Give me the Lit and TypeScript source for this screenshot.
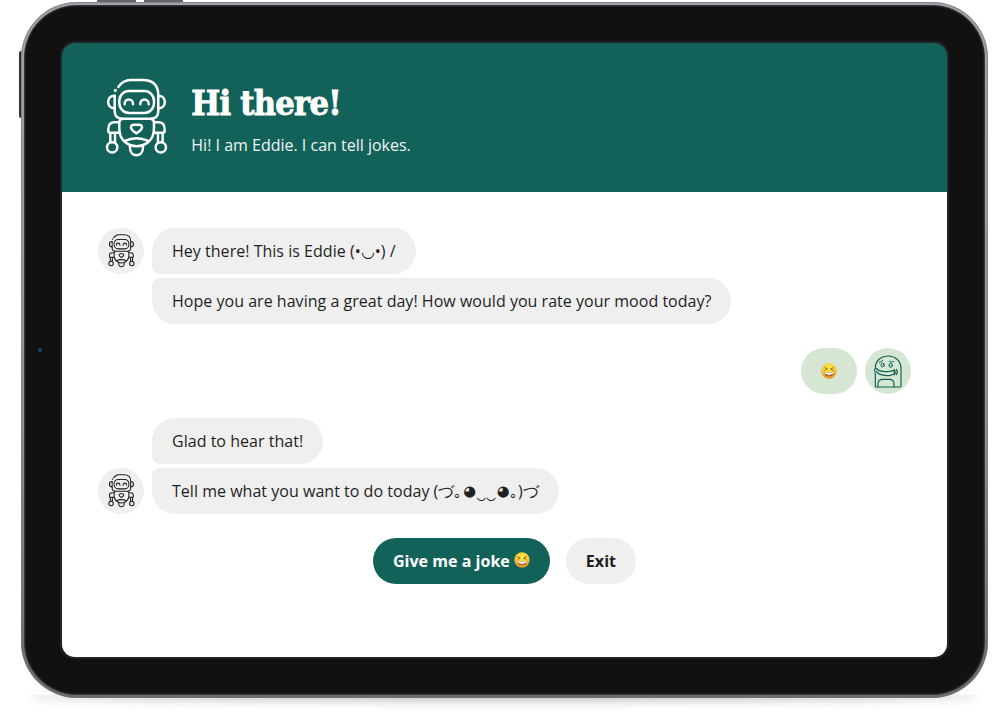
import { LitElement, html, css, svg } from "lit";
import { customElement } from "lit/decorators.js";

@customElement("robot-icon")
class RobotIcon extends LitElement {
  static styles = css`
    :host { display: block; }
    svg { display: block; width: 100%; height: 100%; fill: none; stroke: currentColor; stroke-width: 7.4; stroke-linecap: round; stroke-linejoin: round; }
  `;
  render() {
    const arm = svg`
      <path d="M74 92c-26 0-26 38 0 38"/>
      <path d="M86 172H74q-19 0-19 20v6q0 5 5 5h27"/>
      <path d="M61 204v27M75 204v29"/>
      <circle cx="66.500" cy="247" r="15.500"/>`;
    return html`<svg viewBox="45 39 190 240" aria-hidden="true">
      <path d="M76 76v.1" stroke-width="9"/>
      <path d="M85 66Q99 45 122 45h36q47 0 47 46v47q0 23-23 23H98q-24 0-24-23V92"/>
      <rect x="88" y="78" width="104" height="66" rx="29"/>
      <path d="M104 118v-2a12.500 12.500 0 0 1 25 0v2M151 118v-2a12.500 12.500 0 0 1 25 0v2"/>
      ${arm}<g transform="translate(279 0) scale(-1 1)">${arm}</g>
      <path d="M97 162q-9 1-9 11v18c0 70 104 70 104 0v-18q0-10-9-11"/>
      <path d="M123 187q0-8 9-8h15q9 0 9 8 0 8-17 18-16-10-16-18Z"/>
      <path d="M104 228q36-16 71 0M120 242v6c0 30 39 30 39 0v-6"/>
    </svg>`;
  }
}

@customElement("monster-icon")
class MonsterIcon extends LitElement {
  static styles = css`
    :host { display: block; }
    svg { display: block; width: 100%; height: 100%; fill: none; stroke: currentColor; stroke-width: 3.6; stroke-linecap: round; stroke-linejoin: round; }
  `;
  render() {
    return html`<svg viewBox="250 40 90 104" aria-hidden="true">
      <path d="M257 80c2-46 77-46 77 4v52q0 3-3 3h-71q-3 0-3-3V96"/>
      <path d="M265 138v-8q0-14 14-14h20q14 0 14 14v8"/>
      <g stroke-width="3">
        <ellipse cx="279" cy="73" rx="5" ry="6"/><ellipse cx="303" cy="74" rx="5" ry="6"/>
        <path d="M269 65q7 0 10-6M299 62q6 5 13 1M281 73v.1M301 75v.1"/>
      </g>
      <path d="M261 84q6 8 19 8 15 2 30-2 7 2 4 8-2 5-12 6-14 2-28-2-11-3-14-10M255 92q-2-9 6-9M313 87q7 7 1 15M320 86q6 8 0 16" stroke-width="3.600"/>
    </svg>`;
  }
}

@customElement("grin-emoji")
class GrinEmoji extends LitElement {
  static styles = css`
    :host { display: inline-block; width: 16px; height: 16px; }
    svg { display: block; width: 100%; height: 100%; }
  `;
  render() {
    return html`<svg viewBox="0 0 48 48" role="img" aria-label="😆">
      <defs><radialGradient id="face" cx=".5" cy=".32" r=".7">
        <stop offset="0" stop-color="#ffe94e"/><stop offset=".6" stop-color="#fcc934"/><stop offset="1" stop-color="#e5861b"/>
      </radialGradient></defs>
      <circle cx="24" cy="24" r="23" fill="url(#face)"/>
      <path d="M11 14l8 4-7 4M37 14l-8 4 7 4" fill="none" stroke="#7a4d10" stroke-width="2.300" stroke-linecap="round"/>
      <path d="M9 26q15 3 30 0 0 14-15 14T9 26Z" fill="#85541a"/>
      <path d="M10 27q14 3 28 0 0 6-4 7-10 2-20 0-4-1-4-7Z" fill="#fff"/>
      <path d="M16 37q8-2 16 0-8 4-16 0Z" fill="#e8703f"/>
    </svg>`;
  }
}

@customElement("app-root")
class AppRoot extends LitElement {
  static styles = css`
    :host { display: block; width: 1007px; height: 718px; overflow: hidden; background: #fff; font: 16px/22px "Open Sans", "Noto Sans", sans-serif; color: #1f1f1f; }
    * { box-sizing: border-box; }
    .stage { position: relative; height: 718px; padding: 2px 0 0 21px; }
    .key { position: absolute; background: #66676b; }
    .key.one { left: 97px; top: 0; width: 39px; height: 4px; }
    .key.two { left: 144px; top: 0; width: 39px; height: 4px; }
    .key.side { left: 19px; top: 51px; width: 4px; height: 67px; background: #303136; border-radius: 2px; }
    .shadow { position: absolute; left: 28px; top: 688px; width: 952px; height: 10px; border-radius: 50%; box-shadow: 0 3px 10px #00000040; }
    .tablet { position: relative; width: 967px; height: 696px; padding: 4px; border-radius: 56px; background: linear-gradient(#a0a1a9, #8f9098 60%, #68686d); box-shadow: inset 0 0 0 1px #74757c99; }
    .bezel { width: 959px; height: 688px; border-radius: 52px; background: #111; padding: 35px; box-shadow: 0 0 0 1px #35363a, inset 0 0 0 1px #1d1d1f; }
    .camera { position: absolute; left: 38px; top: 348px; width: 4px; height: 4px; border-radius: 50%; background: #1c4068; }
    .screen { width: 889px; height: 618px; border: 2px solid #222425; border-radius: 15px; background: #111; overflow: hidden; }
    header { display: flex; height: 149px; padding: 35px 43px; background: #136259; color: #fff; }
    header robot-icon { width: 63.300px; height: 80px; }
    .intro { padding-left: 23px; }
    h1 { margin: 3px 0 0; font: bold 34px/44px "DejaVu Serif", serif; font-stretch: condensed; letter-spacing: -.7px; white-space: nowrap; -webkit-text-stroke: .9px #fff; }
    .intro p { margin: 9px 0 0; color: #edf5f3; }
    main { display: flex; flex-direction: column; height: 465px; padding: 36px 36px 0; background: #fff; }
    .row { display: flex; flex: none; gap: 8px; height: 46px; margin-bottom: 4px; }
    .indent { padding-left: 54px; }
    .user { justify-content: flex-end; margin: 20px 0 24px; }
    .avatar { display: grid; place-items: center; width: 46px; height: 46px; border-radius: 50%; background: #efefef; }
    .avatar robot-icon { width: 27px; height: 34px; }
    .bubble { height: 46px; padding: 12px 20px; border-radius: 23px; background: #efefef; white-space: nowrap; letter-spacing: .025px; }
    .first { border-bottom-left-radius: 8px; }
    .last { border-top-left-radius: 8px; }
    .eye { display: inline-block; width: 14px; font-size: 24px; line-height: 0; vertical-align: -2px; -webkit-text-stroke: 1px #1f1f1f; }
    .user .bubble, .user .avatar { background: #d5e7d3; color: #136259; }
    .user monster-icon { width: 30px; height: 34.700px; }
    .user grin-emoji { margin-top: 3px; }
    .actions { display: flex; justify-content: center; gap: 16px; margin-top: 20px; }
    button { height: 46px; padding: 0 20px; border: 0; border-radius: 23px; background: #efefef; color: #1f1f1f; font: bold 16px/22px "Open Sans", sans-serif; letter-spacing: .03px; white-space: nowrap; }
    .primary { display: flex; align-items: center; gap: 4px; background: #136259; color: #fff; }
    .primary grin-emoji { margin-top: -2px; }
  `;
  render() {
    return html`<div class="stage">
      <i class="key one"></i><i class="key two"></i><i class="key side"></i><i class="shadow"></i>
      <div class="tablet"><div class="bezel"><div class="screen">
        <header><robot-icon></robot-icon><div class="intro"><h1>Hi there!</h1><p>Hi! I am Eddie. I can tell jokes.</p></div></header>
        <main>
          <div class="row"><div class="avatar"><robot-icon></robot-icon></div><div class="bubble first">Hey there! This is Eddie (•◡•) /</div></div>
          <div class="row indent"><div class="bubble last">Hope you are having a great day! How would you rate your mood today?</div></div>
          <div class="row user"><div class="bubble"><grin-emoji></grin-emoji></div><div class="avatar"><monster-icon></monster-icon></div></div>
          <div class="row indent"><div class="bubble first">Glad to hear that!</div></div>
          <div class="row"><div class="avatar"><robot-icon></robot-icon></div><div class="bubble last">Tell me what you want to do today (づ｡<span class="eye">◕</span>‿‿<span class="eye">◕</span>｡)づ</div></div>
          <div class="actions"><button class="primary">Give me a joke <grin-emoji></grin-emoji></button><button>Exit</button></div>
        </main>
      </div></div></div>
      <i class="camera"></i>
    </div>`;
  }
}
